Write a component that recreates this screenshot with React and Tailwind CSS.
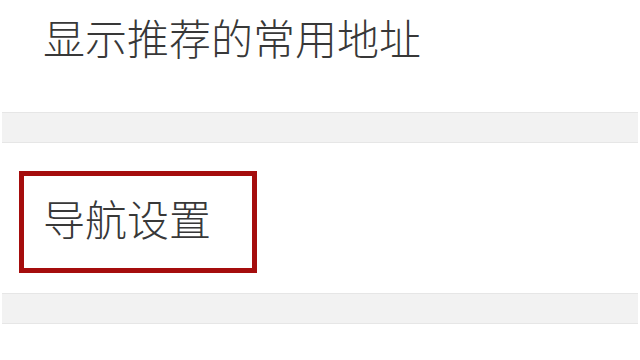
const font = { fontFamily: '"Noto Sans CJK SC", "Noto Sans", sans-serif' };

const Band = () => <div className="h-[31px] mx-[2px] bg-[#f2f2f2] border-y border-[#e6e6e6]" />;

export default function App() {
  return (
    <div className="w-[640px] h-[360px] bg-white overflow-hidden text-[#383838] font-light" style={font}>
      <div className="h-[112px] pl-[43px] pt-[16px]">
        <div className="text-[42px] leading-[42px]">显示推荐的常用地址</div>
      </div>
      <Band />
      <div className="h-[150px] pl-[19px] pt-[28px]">
        <div className="w-[238px] h-[102px] border-[5px] border-[#a50d0d] flex items-center pl-[19px] pb-2">
          <span className="text-[42px] leading-[42px]">导航设置</span>
        </div>
      </div>
      <Band />
    </div>
  );
}
